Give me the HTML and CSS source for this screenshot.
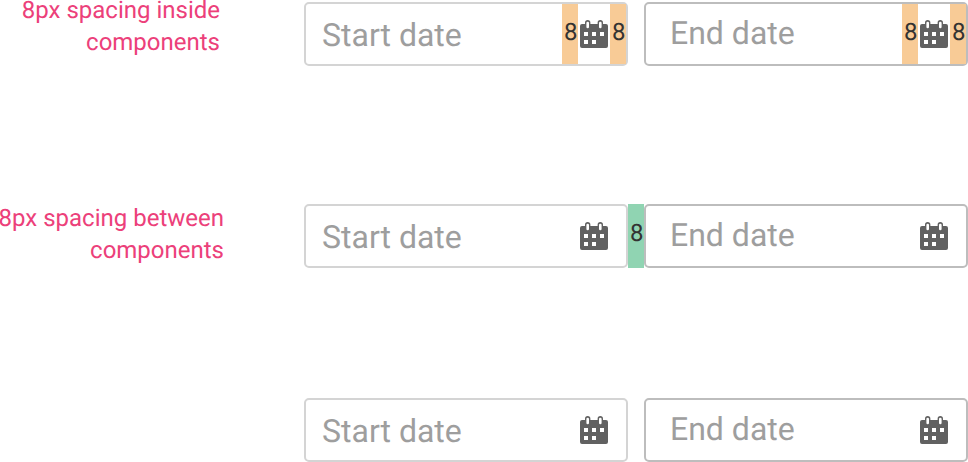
FILE: index.html
```
<!DOCTYPE html>
<html lang="en">
<head>
<meta charset="utf-8">
<title>Component spacing</title>
<link rel="stylesheet" href="styles.css">
</head>
<body>
<svg width="0" height="0" class="defs" aria-hidden="true">
  <symbol id="calendar" viewBox="0 0 28 28">
    <path fill="#616161" d="M2 4h3V2.7a2.7 2.7 0 0 1 5.4 0V4h7.2V2.7a2.7 2.7 0 0 1 5.4 0V4h3a2 2 0 0 1 2 2v20a2 2 0 0 1-2 2H2a2 2 0 0 1-2-2V6a2 2 0 0 1 2-2z"/>
    <path fill="#fff" d="M6.4 3a1.3 1.3 0 0 1 2.6 0v4a1.3 1.3 0 0 1-2.6 0zM19 3a1.3 1.3 0 0 1 2.6 0v4a1.3 1.3 0 0 1-2.6 0zM4 12h4v4H4zM12 12h4v4h-4zM20 12h4v4h-4zM4 20h4v4H4zM12 20h4v4h-4z"/>
  </symbol>
</svg>
<main class="examples">
  <section class="example">
    <p class="note note-inside">8px spacing inside<br>components</p>
    <div class="field start"><span class="placeholder">Start date</span><span class="space">8</span><svg class="icon"><use href="#calendar"/></svg><span class="space">8</span></div>
    <div class="gap"></div>
    <div class="field end"><span class="placeholder">End date</span><span class="space">8</span><svg class="icon"><use href="#calendar"/></svg><span class="space">8</span></div>
  </section>
  <section class="example">
    <p class="note note-between">8px spacing between<br>components</p>
    <div class="field start"><span class="placeholder">Start date</span><svg class="icon"><use href="#calendar"/></svg><span class="inset"></span></div>
    <div class="gap marked">8</div>
    <div class="field end"><span class="placeholder">End date</span><svg class="icon"><use href="#calendar"/></svg><span class="inset"></span></div>
  </section>
  <section class="example">
    <p class="note"></p>
    <div class="field start"><span class="placeholder">Start date</span><svg class="icon"><use href="#calendar"/></svg><span class="inset"></span></div>
    <div class="gap"></div>
    <div class="field end"><span class="placeholder">End date</span><svg class="icon"><use href="#calendar"/></svg><span class="inset"></span></div>
  </section>
</main>
</body>
</html>
```
FILE: styles.css
```
* {
  box-sizing: border-box;
}

body {
  margin: 0;
  overflow: hidden;
  background: #fff;
  font-family: Roboto, "Liberation Sans", sans-serif;
  text-rendering: geometricPrecision;
}

.defs {
  display: block;
}

.examples {
  display: grid;
  grid-template-rows: 202px 194px 64px;
  padding-top: 2px;
}

.example {
  display: grid;
  grid-template-columns: 304px 324px 16px 324px;
  grid-template-rows: 64px;
}

.note {
  margin: 0;
  color: #ec407a;
  font-size: 24px;
  line-height: 32px;
  text-align: right;
  white-space: nowrap;
}

.note-inside {
  margin: -8px 84px 0 0;
}

.note-between {
  margin: -2px 80px 0 -4px;
}

.field {
  display: flex;
  border: 2px solid #d4d4d4;
  border-radius: 5px;
}

.field.end {
  border-color: #bdbdbd;
}

.placeholder {
  flex: 1;
  padding: 1px 0 0 16px;
  color: #9e9e9e;
  font-size: 32px;
  line-height: 60px;
  white-space: nowrap;
}

.end .placeholder {
  padding: 0 0 0 24px;
  line-height: 58px;
}

.icon {
  flex: none;
  width: 28px;
  height: 28px;
  margin: 16px 2px 0;
}

.space,
.gap {
  flex: none;
  width: 16px;
  padding-left: 2px;
  color: #333;
  font-size: 24px;
  line-height: 56px;
}

.space {
  background: #f8cb96;
}

.inset {
  width: 16px;
}

.marked {
  background: #90d4b2;
  line-height: 58px;
}
```
